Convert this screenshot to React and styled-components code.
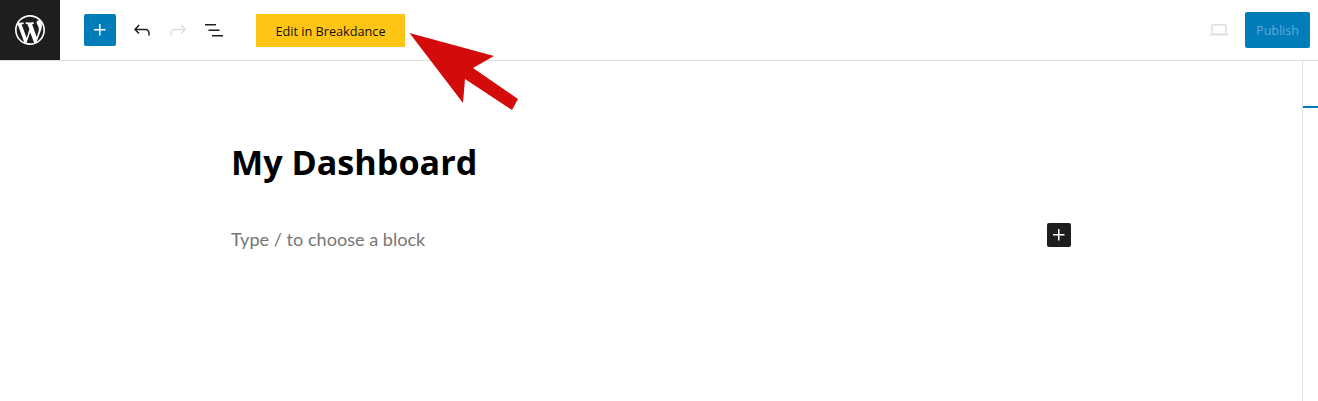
import React from "react";
import styled, { createGlobalStyle } from "styled-components";

const Global = createGlobalStyle`
  html, body { margin: 0; padding: 0; background: #fff; }
  body { font-family: "Open Sans", "Noto Sans", sans-serif; overflow: hidden; }
`;

const Page = styled.div`
  position: relative;
  width: 1318px;
  height: 401px;
  display: flex;
  flex-direction: column;
  overflow: hidden;
`;
const Header = styled.header`
  height: 60px;
  flex: none;
  display: flex;
  align-items: center;
  border-bottom: 1px solid #e0e0e0;
`;
const Logo = styled.div`
  width: 60px;
  height: 60px;
  background: #1e1e1e;
  display: flex;
  align-items: center;
  justify-content: center;
  color: #fff;
`;
const Tools = styled.div`
  display: flex;
  align-items: center;
  margin-left: 24px;
  gap: 4px;
`;
const AddButton = styled.button`
  width: 32px;
  height: 32px;
  padding: 0;
  border: 0;
  border-radius: 2px;
  background: #007cba;
  color: #fff;
  display: flex;
  align-items: center;
  justify-content: center;
  margin-right: 6px;
`;
const ToolButton = styled.button`
  width: 32px;
  height: 32px;
  padding: 0;
  border: 0;
  background: none;
  display: flex;
  align-items: center;
  justify-content: center;
  color: ${(p) => (p.$off ? "#dedede" : "#1e1e1e")};
`;
const BreakdanceButton = styled.button`
  width: 149px;
  height: 33px;
  margin-left: 26px;
  padding: 2px 0 0;
  border: 0;
  background: #ffc514;
  color: #111;
  font: 500 12.7px/20px "Open Sans", sans-serif;
`;
const Right = styled.div`
  margin-left: auto;
  margin-right: 8px;
  display: flex;
  align-items: center;
  gap: 10px;
`;
const Publish = styled.button`
  width: 65px;
  height: 36px;
  padding: 2px 0 0;
  border: 0;
  border-radius: 2px;
  background: #007cba;
  color: #66a9d6;
  font: 500 12.5px/20px "Open Sans", sans-serif;
`;
const Body = styled.div`
  flex: 1;
  display: flex;
  min-height: 0;
`;
const Canvas = styled.main`
  flex: 1;
  padding: 79px 0 0 231px;
`;
const Title = styled.h1`
  margin: 0;
  font: 700 34.15px/44px "Open Sans", sans-serif;
  color: #000;
`;
const BlockRow = styled.div`
  width: 840px;
  margin-top: 39px;
  display: flex;
  justify-content: space-between;
  align-items: flex-start;
`;
const Placeholder = styled.p`
  margin: 0;
  padding-top: 1px;
  font: 400 18.1px/30px "Lato", sans-serif;
  color: #757575;
`;
const BlockAdd = styled.button`
  width: 24px;
  height: 24px;
  padding: 0;
  border: 0;
  border-radius: 2px;
  background: #1e1e1e;
  color: #fff;
  display: flex;
  align-items: center;
  justify-content: center;
`;
const Sidebar = styled.aside`
  width: 15px;
  flex: none;
  border-left: 1px solid #e0e0e0;
  padding-top: 45px;
`;
const SidebarTab = styled.div`
  height: 2px;
  background: #007cba;
`;
const Pointer = styled.svg`
  position: absolute;
  left: 400px;
  top: 25px;
`;

const Ico = ({ d, size = 24 }) => (
  <svg width={size} height={size} viewBox="0 0 24 24" fill="currentColor" aria-hidden="true">
    <path d={d} />
  </svg>
);
const plus = "M11 12.5V17.5H12.5V12.5H17.5V11H12.5V6H11V11H6V12.5H11Z";

export default function App() {
  return (
    <Page>
      <Global />
      <Header>
        <Logo>
          <svg width="36" height="36" viewBox="-2 -2 24 24" fill="currentColor" aria-hidden="true">
            <path d="M20 10c0-5.51-4.49-10-10-10C4.48 0 0 4.49 0 10c0 5.52 4.48 10 10 10 5.51 0 10-4.48 10-10zM7.78 15.37L4.37 6.22c.55-.02 1.17-.08 1.17-.08.5-.06.44-1.13-.06-1.11 0 0-1.45.11-2.37.11-.18 0-.37 0-.58-.01C4.12 2.69 6.87 1.11 10 1.11c2.33 0 4.45.87 6.05 2.34-.68-.11-1.65.39-1.65 1.58 0 .74.45 1.36.9 2.1.35.61.55 1.36.55 2.46 0 1.49-1.4 5-1.4 5l-3.03-8.37c.54-.02.82-.17.82-.17.5-.05.44-1.25-.06-1.22 0 0-1.44.12-2.38.12-.87 0-2.33-.12-2.33-.12-.5-.03-.56 1.2-.06 1.22l.92.08 1.26 3.41zM17.41 10c.24-.64.74-1.87.43-4.25.7 1.29 1.05 2.71 1.05 4.25 0 3.29-1.73 6.24-4.4 7.78.97-2.59 1.94-5.2 2.92-7.78zM6.1 18.09C3.12 16.65 1.11 13.53 1.11 10c0-1.3.23-2.48.72-3.59C3.25 10.3 4.67 14.2 6.1 18.09zm4.03-6.63l2.58 6.98c-.86.29-1.76.45-2.71.45-.79 0-1.57-.11-2.29-.33.81-2.38 1.62-4.74 2.42-7.1z" />
          </svg>
        </Logo>
        <Tools>
          <AddButton aria-label="Add block"><Ico d={plus} /></AddButton>
          <ToolButton aria-label="Undo"><Ico d="M18.3 11.7c-.6-.6-1.4-.9-2.3-.9H6.7l2.9-3.3-1.1-1-4.5 5L8.5 16l1-1-2.7-2.7H16c.5 0 .9.2 1.3.5 1 1 1 3.4 1 4.5v.3h1.5v-.2c0-1.5 0-4.3-1.5-5.7z" /></ToolButton>
          <ToolButton $off aria-label="Redo"><Ico d="M15.6 6.5l-1.1 1 2.9 3.3H8c-.9 0-1.7.3-2.3.9-1.4 1.5-1.4 4.2-1.4 5.7v.2h1.5v-.3c0-1.1 0-3.5 1-4.5.3-.3.7-.5 1.3-.5h9.2L14.5 15l1.1 1.1 4.6-4.6-4.6-5z" /></ToolButton>
          <ToolButton aria-label="List view"><Ico d="M3 6h11v1.5H3V6zm3.5 5.5h11V13h-11v-1.5zM21 17H10v1.5h11V17z" /></ToolButton>
        </Tools>
        <BreakdanceButton>Edit in Breakdance</BreakdanceButton>
        <Right>
          <ToolButton $off aria-label="Preview"><Ico d="M20.5 16h-.7V8c0-1.1-.9-2-2-2H6.2c-1.1 0-2 .9-2 2v8h-.7c-.8 0-1.5.7-1.5 1.5h20c0-.8-.7-1.5-1.5-1.5zM5.7 8c0-.3.2-.5.5-.5h11.6c.3 0 .5.2.5.5v7.6H5.7V8z" /></ToolButton>
          <Publish>Publish</Publish>
        </Right>
      </Header>
      <Body>
        <Canvas>
          <Title>My Dashboard</Title>
          <BlockRow>
            <Placeholder>Type / to choose a block</Placeholder>
            <BlockAdd aria-label="Add block"><Ico d={plus} /></BlockAdd>
          </BlockRow>
        </Canvas>
        <Sidebar><SidebarTab /></Sidebar>
      </Body>
      <Pointer width="125" height="90" viewBox="400 25 125 90" aria-hidden="true">
        <polygon points="409.5,33 494,56 473,68 518,99 512,110 465,79 463,103" fill="#d30c0b" />
      </Pointer>
    </Page>
  );
}
